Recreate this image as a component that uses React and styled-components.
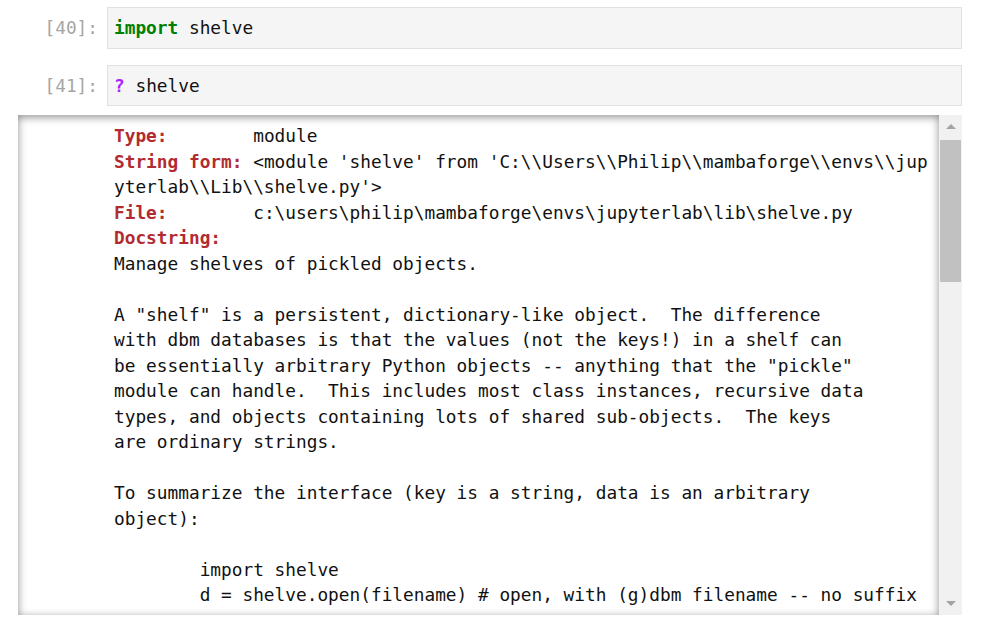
import styled, { createGlobalStyle } from "styled-components";

const GlobalStyle = createGlobalStyle`
  body {
    margin: 0;
    background: #fff;
    font-family: "DejaVu Sans Mono", monospace;
  }
`;

const Notebook = styled.div`
  padding-top: 7px;
  width: 982px;
`;

const Cell = styled.div`
  display: flex;
  align-items: flex-start;
  margin-bottom: ${(p) => p.gap || 16}px;
`;

const Prompt = styled.div`
  width: 107px;
  box-sizing: border-box;
  padding-right: 9px;
  padding-top: 8px;
  text-align: right;
  color: #a6a6a6;
  font-size: 17.8px;
  line-height: 25.5px;
`;

const InputBox = styled.div`
  width: 855px;
  box-sizing: border-box;
  border: 1px solid #e0e0e0;
  background: #f5f5f5;
  padding: 7px 6px 7px 6px;
  font-size: 17.8px;
  line-height: 25.5px;
  color: #111;
  white-space: pre;
`;

const Keyword = styled.span`
  color: ${(p) => p.color};
  font-weight: bold;
`;

const Pager = styled.div`
  display: flex;
  margin-left: 18px;
  width: 944px;
  height: 500px;
`;

const PagerBody = styled.div`
  flex: 1;
  overflow: hidden;
  box-shadow: inset 0 2px 8px rgba(0, 0, 0, 0.45);
  background: #fff;
  padding: 8px 0 0 96px;
`;

const Pre = styled.pre`
  margin: 0;
  font-family: "DejaVu Sans Mono", monospace;
  font-size: 17.8px;
  line-height: 25.5px;
  color: #111;
`;

const Label = styled.span`
  color: #b22b31;
  font-weight: bold;
`;

const ScrollTrack = styled.div`
  width: 23px;
  background: #f1f1f1;
  display: flex;
  flex-direction: column;
  align-items: center;
`;

const ArrowButton = styled.div`
  height: 23px;
  width: 23px;
  display: flex;
  align-items: center;
  justify-content: center;
  margin-top: ${(p) => (p.bottom ? "auto" : "0")};
`;

const Thumb = styled.div`
  width: 21px;
  height: 142px;
  margin-top: 2px;
  background: #c1c1c1;
`;

const Arrow = ({ down }) => (
  <svg width="10" height="5" viewBox="0 0 10 5">
    <polygon
      points={down ? "0,0 10,0 5,5" : "0,5 10,5 5,0"}
      fill="#a3a3a3"
    />
  </svg>
);

const doc = `Manage shelves of pickled objects.

A "shelf" is a persistent, dictionary-like object.  The difference
with dbm databases is that the values (not the keys!) in a shelf can
be essentially arbitrary Python objects -- anything that the "pickle"
module can handle.  This includes most class instances, recursive data
types, and objects containing lots of shared sub-objects.  The keys
are ordinary strings.

To summarize the interface (key is a string, data is an arbitrary
object):

        import shelve
        d = shelve.open(filename) # open, with (g)dbm filename -- no suffix

        d[key] = data   # store data at key (overwrites old data if
                        # using an existing key)`;

const App = () => {
  return (
    <Notebook>
      <GlobalStyle />
      <Cell>
        <Prompt>[40]:</Prompt>
        <InputBox>
          <Keyword color="#008000">import</Keyword> shelve
        </InputBox>
      </Cell>
      <Cell gap={9}>
        <Prompt>[41]:</Prompt>
        <InputBox>
          <Keyword color="#aa22ff">?</Keyword> shelve
        </InputBox>
      </Cell>
      <Pager>
        <PagerBody>
          <Pre>
            <Label>Type:</Label>{"        module\n"}
            <Label>String form:</Label>
            {" <module 'shelve' from 'C:\\\\Users\\\\Philip\\\\mambaforge\\\\envs\\\\jup\nyterlab\\\\Lib\\\\shelve.py'>\n"}
            <Label>File:</Label>
            {"        c:\\users\\philip\\mambaforge\\envs\\jupyterlab\\lib\\shelve.py\n"}
            <Label>Docstring:</Label>
            {"\n" + doc}
          </Pre>
        </PagerBody>
        <ScrollTrack>
          <ArrowButton>
            <Arrow />
          </ArrowButton>
          <Thumb />
          <ArrowButton bottom>
            <Arrow down />
          </ArrowButton>
        </ScrollTrack>
      </Pager>
    </Notebook>
  );
};

export default App;
